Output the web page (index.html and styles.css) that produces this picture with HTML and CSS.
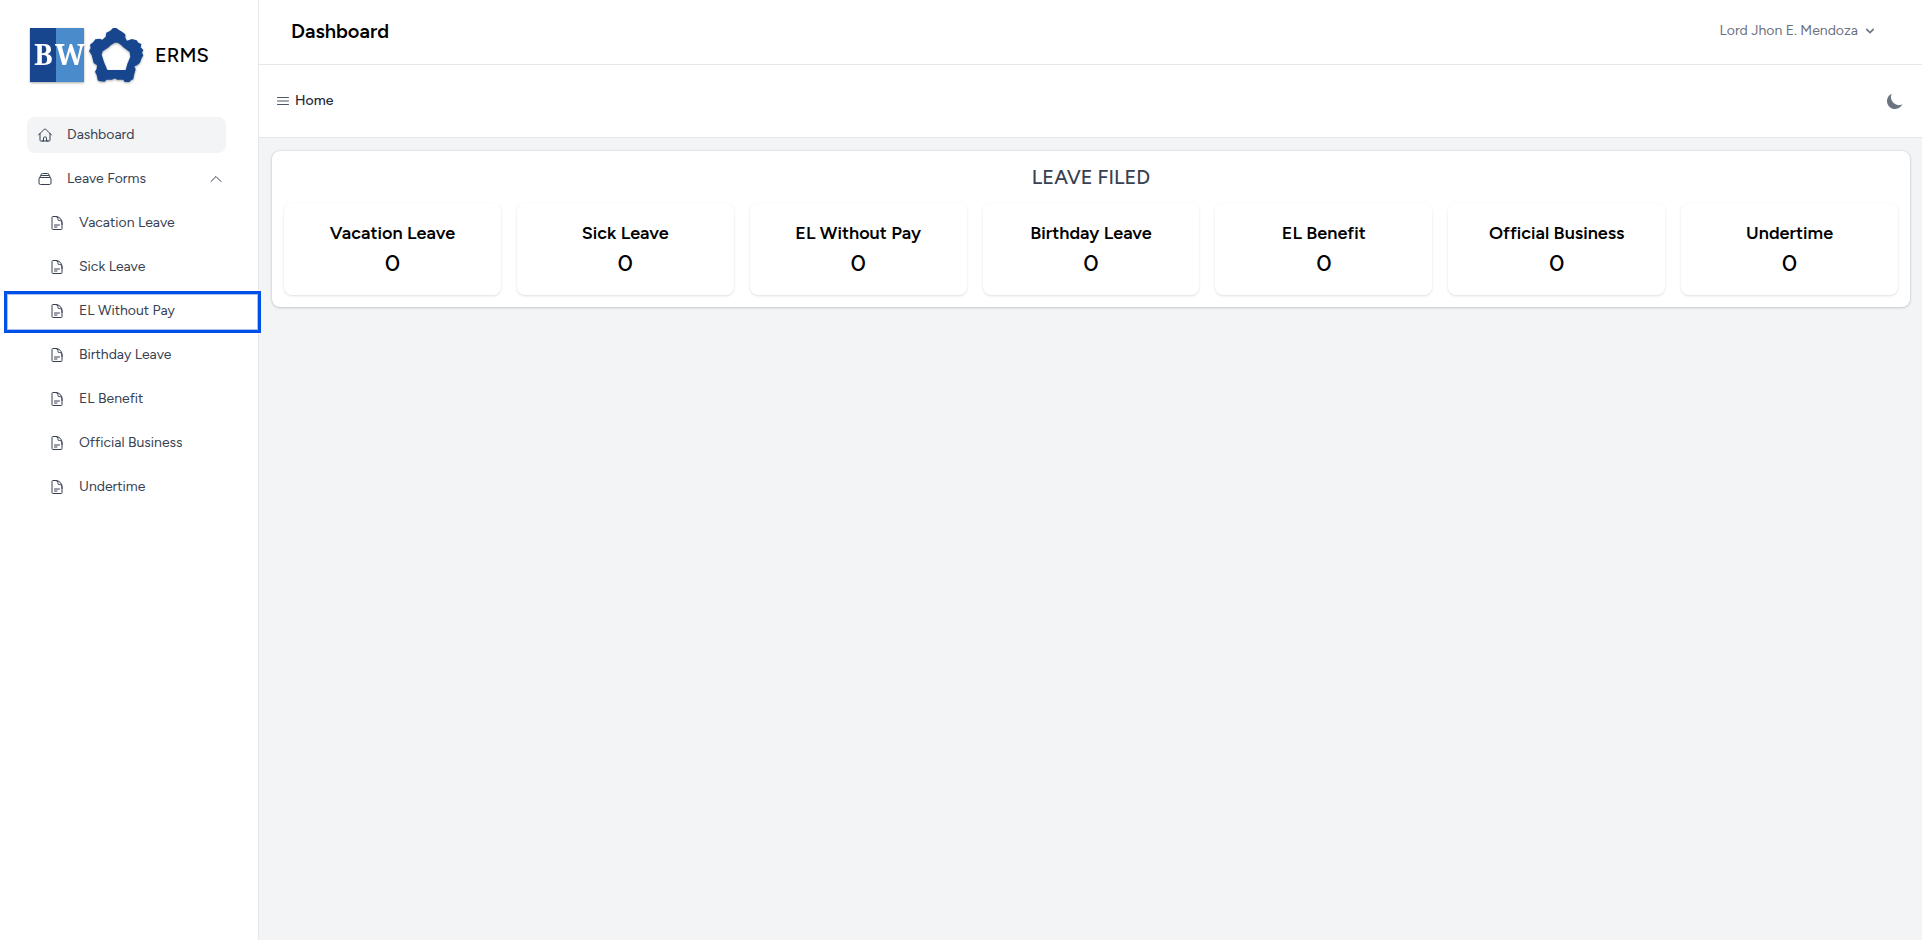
FILE: index.html
```
<!DOCTYPE html>
<html lang="en">
<head>
<meta charset="utf-8">
<title>ERMS - Dashboard</title>
<link rel="stylesheet" href="styles.css">
</head>
<body>
<svg class="sprite" aria-hidden="true">
  <symbol id="doc" viewBox="0 0 24 24"><path d="M19.5 14.25v-2.625a3.375 3.375 0 0 0-3.375-3.375h-1.5A1.125 1.125 0 0 1 13.5 7.125v-1.5a3.375 3.375 0 0 0-3.375-3.375H8.25m0 12.75h7.5m-7.5 3H12M10.5 2.25H5.625c-.621 0-1.125.504-1.125 1.125v17.25c0 .621.504 1.125 1.125 1.125h12.75c.621 0 1.125-.504 1.125-1.125V11.25a9 9 0 0 0-9-9Z"/></symbol>
</svg>
<div class="layout">
  <aside class="sidebar">
    <a class="brand" href="#">
      <svg class="logo" viewBox="0 0 116 54" role="img" aria-label="BW logo">
        <rect x="0" y="0" width="26" height="54" fill="#17468f"/>
        <rect x="26" y="0" width="28" height="54" fill="#4a8ccb"/>
        <text class="logo-text" x="4" y="37">B</text>
        <text class="logo-text" x="25" y="37">W</text>
        <g transform="translate(54 -6) scale(.3333)">
          <path fill="#17468f" fill-rule="evenodd" d="M97 18l8 6 9 5 10 8v10l5 9 15-5 14 4 5 7 9 4-2 10 8 8-4 8 4 8-6 10-4 12-9 8-8 3 4 9-5 18-2 12-6 2-6 6h-14l-4-7h-19l-3-3h-8l-3 3h-18l-5 6-18-2-3-4-3-14-5-10 5-9 1-10-10-7-3-12-3-12-8-12 5-9-2-10 10-8 6-8 13-2 8 3 10-9 2-12 12-6 8-8zM92 62L80 70 74 76 56 88 53 98 60 120 70 144H125L130 126 139 104 137 90 118 76 112 70 102 62z"/>
        </g>
      </svg>
      <span>ERMS</span>
    </a>
    <nav class="nav">
      <a class="nav-link active" href="#">
        <svg class="icon" viewBox="0 0 24 24"><path d="m2.25 12 8.954-8.955c.44-.439 1.152-.439 1.591 0L21.75 12M4.5 9.75v10.125c0 .621.504 1.125 1.125 1.125H9.75v-4.875c0-.621.504-1.125 1.125-1.125h2.25c.621 0 1.125.504 1.125 1.125V21h4.125c.621 0 1.125-.504 1.125-1.125V9.75M8.25 21h8.25"/></svg>
        <span>Dashboard</span>
      </a>
      <button class="nav-link" type="button" aria-expanded="true">
        <svg class="icon" viewBox="0 0 24 24"><path d="M6 6.878V6a2.25 2.25 0 0 1 2.25-2.25h7.5A2.25 2.25 0 0 1 18 6v.878m-12 0c.235-.083.487-.128.75-.128h10.5c.263 0 .515.045.75.128m-12 0A2.25 2.25 0 0 0 4.5 9v.878m13.5-3A2.25 2.25 0 0 1 19.5 9v.878m0 0a2.246 2.246 0 0 0-.75-.128H5.25c-.263 0-.515.045-.75.128m15 0A2.25 2.25 0 0 1 21 12v6a2.25 2.25 0 0 1-2.25 2.25H5.25A2.25 2.25 0 0 1 3 18v-6c0-.98.626-1.813 1.5-2.122"/></svg>
        <span>Leave Forms</span>
        <svg class="icon caret" viewBox="0 0 24 24"><path d="m4.5 15.75 7.5-7.5 7.5 7.5"/></svg>
      </button>
      <div class="subnav">
        <a class="nav-link" href="#"><svg class="icon"><use href="#doc"/></svg><span>Vacation Leave</span></a>
        <a class="nav-link" href="#"><svg class="icon"><use href="#doc"/></svg><span>Sick Leave</span></a>
        <a class="nav-link marked" href="#"><svg class="icon"><use href="#doc"/></svg><span>EL Without Pay</span></a>
        <a class="nav-link" href="#"><svg class="icon"><use href="#doc"/></svg><span>Birthday Leave</span></a>
        <a class="nav-link" href="#"><svg class="icon"><use href="#doc"/></svg><span>EL Benefit</span></a>
        <a class="nav-link" href="#"><svg class="icon"><use href="#doc"/></svg><span>Official Business</span></a>
        <a class="nav-link" href="#"><svg class="icon"><use href="#doc"/></svg><span>Undertime</span></a>
      </div>
    </nav>
  </aside>
  <div class="content">
    <header class="topbar">
      <h1>Dashboard</h1>
      <button class="user" type="button">
        <span>Lord Jhon E. Mendoza</span>
        <svg viewBox="0 0 20 20"><path d="M5.293 7.293a1 1 0 0 1 1.414 0L10 10.586l3.293-3.293a1 1 0 1 1 1.414 1.414l-4 4a1 1 0 0 1-1.414 0l-4-4a1 1 0 0 1 0-1.414z"/></svg>
      </button>
    </header>
    <div class="toolbar">
      <a class="home" href="#">
        <svg class="icon" viewBox="0 0 24 24"><path d="M3.75 6.75h16.5M3.75 12h16.5m-16.5 5.25h16.5"/></svg>
        <span>Home</span>
      </a>
      <button class="theme" type="button" aria-label="Toggle dark mode">
        <svg viewBox="0 0 20 20"><path d="M17.293 13.293A8 8 0 0 1 6.707 2.707a8.001 8.001 0 1 0 10.586 10.586z"/></svg>
      </button>
    </div>
    <main>
      <section class="panel">
        <h2>LEAVE FILED</h2>
        <div class="cards">
          <div class="card"><h3>Vacation Leave</h3><p>0</p></div>
          <div class="card"><h3>Sick Leave</h3><p>0</p></div>
          <div class="card"><h3>EL Without Pay</h3><p>0</p></div>
          <div class="card"><h3>Birthday Leave</h3><p>0</p></div>
          <div class="card"><h3>EL Benefit</h3><p>0</p></div>
          <div class="card"><h3>Official Business</h3><p>0</p></div>
          <div class="card"><h3>Undertime</h3><p>0</p></div>
        </div>
      </section>
    </main>
  </div>
</div>
</body>
</html>
```
FILE: styles.css
```
*, *::before, *::after { box-sizing: border-box; }
body { margin: 0; font-family: Figtree, Lato, sans-serif; font-size: 14px; line-height: 20px; color: #000; background: #f3f4f6; }
h1, h2, h3, p { margin: 0; font-weight: 500; }
a { color: inherit; text-decoration: none; }
button { font: inherit; color: inherit; background: none; border: 0; padding: 0; cursor: pointer; }
svg { flex: none; }
.sprite { position: absolute; width: 0; height: 0; }
.layout { display: flex; min-height: 100vh; }

.sidebar { flex: none; width: 259px; padding: 28px 32px 28px 27px; background: #fff; border-right: 1px solid #e5e7eb; }
.brand { display: flex; align-items: center; gap: 9px; padding-left: 3px; font-size: 20px; line-height: 28px; font-weight: 500; }
.logo { width: 116px; height: 54px; overflow: visible; filter: drop-shadow(0 1px 1px rgba(0, 0, 0, .35)); }
.logo-text { font-family: "Noto Serif", "DejaVu Serif", "Liberation Serif", serif; font-size: 28px; font-weight: 700; fill: #fff; }
.nav { display: flex; flex-direction: column; gap: 8px; padding-top: 35px; color: #374151; }
.subnav { display: flex; flex-direction: column; gap: 8px; padding-left: 12px; }
.nav-link { position: relative; display: flex; align-items: center; gap: 14px; height: 36px; padding: 0 10px; border-radius: 8px; text-align: left; }
.nav-link.active { background: #f3f4f6; }
.icon { width: 16px; height: 16px; fill: none; stroke: currentColor; stroke-width: 1.5; stroke-linecap: round; stroke-linejoin: round; }
.caret { margin-left: auto; margin-right: -8px; }
.marked::after { content: ""; position: absolute; inset: -2px -35px -4px -35px; border: 3px solid #0050e6; box-shadow: inset 0 0 0 1px rgba(0, 80, 230, .35); }

.content { flex: 1; min-width: 0; }
.topbar { display: flex; align-items: center; justify-content: space-between; height: 65px; padding: 0 44px 2px 32px; background: #fff; border-bottom: 1px solid #e5e7eb; }
.topbar h1 { font-size: 20px; line-height: 28px; font-weight: 600; }
.user { display: flex; align-items: center; gap: 4px; color: #6b7280; }
.user svg { width: 16px; height: 16px; fill: currentColor; }
.toolbar { display: flex; align-items: center; justify-content: space-between; height: 73px; padding: 0 17px 0 16px; background: #fff; border-bottom: 1px solid #e5e7eb; }
.home { display: flex; align-items: center; gap: 4px; font-weight: 500; color: #1f2937; }
.home .icon { color: #4b5563; }
.theme { display: flex; color: #6b7280; }
.theme svg { width: 20px; height: 20px; fill: currentColor; }

main { padding: 13px 12px 12px 13px; }
.panel { padding: 12px; background: #fff; border-radius: 8px; box-shadow: 0 0 2px rgba(0, 0, 0, .16), 0 1px 3px rgba(0, 0, 0, .14); }
.panel h2 { padding-bottom: 12px; font-size: 20px; line-height: 28px; text-align: center; color: #374151; }
.cards { display: grid; grid-template-columns: repeat(7, minmax(0, 1fr)); gap: 16px; }
.card { padding: 16px; text-align: center; background: #fff; border-radius: 8px; box-shadow: 0 1px 3px rgba(0, 0, 0, .1), 0 1px 2px -1px rgba(0, 0, 0, .1); }
.card h3 { font-size: 18px; line-height: 28px; font-weight: 600; }
.card p { font-size: 24px; line-height: 32px; }
```
